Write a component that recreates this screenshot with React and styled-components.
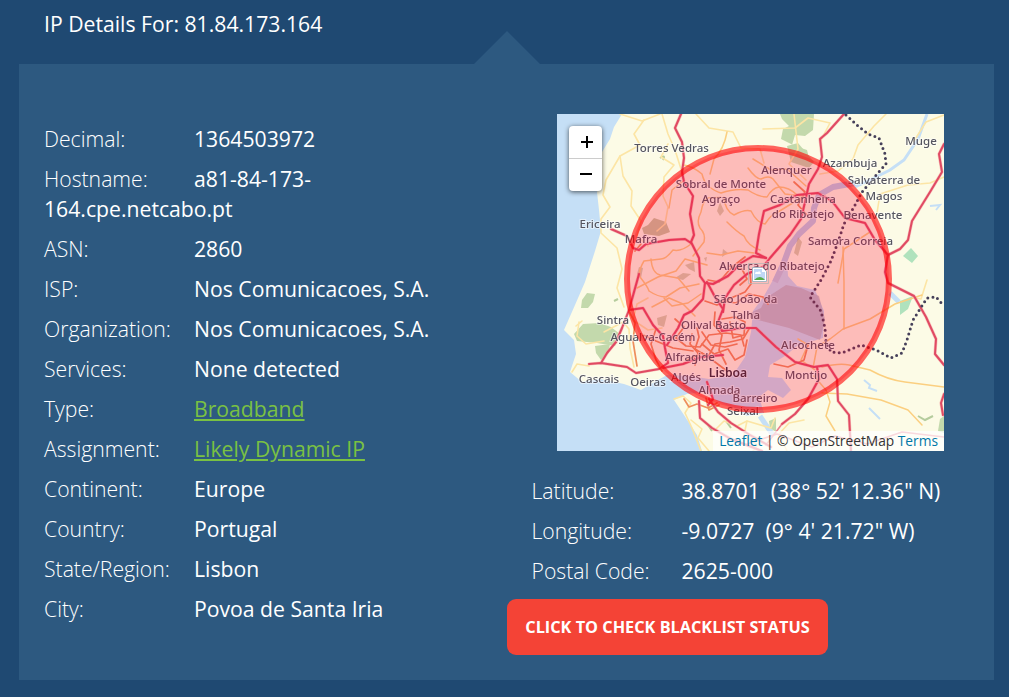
import React from "react";
import styled, { createGlobalStyle } from "styled-components";

const GlobalStyle = createGlobalStyle`
  * { box-sizing: border-box; }
  body {
    margin: 0;
    background: #1f4972;
    font-family: "Open Sans", sans-serif;
    color: #fff;
  }
`;

const Page = styled.main`
  height: 697px;
  overflow: hidden;
  background: #1f4972;
`;

const Heading = styled.h2`
  margin: 0;
  height: 64px;
  padding: 9px 44px 0;
  font-size: 21.2px;
  font-weight: 400;
  line-height: 30px;
`;

const Panel = styled.section`
  position: relative;
  display: flex;
  width: 975px;
  height: 616px;
  margin-left: 19px;
  background: #2d5980;
`;

const Pointer = styled.span`
  position: absolute;
  left: 455px;
  bottom: 100%;
  border: solid transparent;
  border-width: 0 33px 33px;
  border-bottom-color: #2d5980;
`;

const Details = styled.div`
  width: 488px;
  padding: 60px 25px 0;
`;

const Location = styled.div`
  padding-top: 50px;
`;

const Coordinates = styled.div`
  padding: 25px 0 3px 24.5px;
`;

const Row = styled.div`
  width: ${(p) => p.$width || "438px"};
  margin-bottom: 10px;
  font-size: 21.2px;
  line-height: 30px;
`;

const Label = styled.span`
  display: inline-block;
  width: 150px;
  font-weight: 300;
`;

const Value = styled.span`
  font-weight: 500;
  white-space: pre-wrap;
`;

const GreenLink = styled.a`
  color: #7ac143;
  font-weight: 400;
  text-decoration: underline;
`;

const BlacklistButton = styled.button`
  display: block;
  width: 321px;
  height: 56px;
  padding: 0;
  border: 0;
  border-radius: 9px;
  background: #f44336;
  color: #fff;
  font: 700 16.3px/56px "Open Sans", sans-serif;
`;

const MapFrame = styled.div`
  position: relative;
  width: 387px;
  height: 337px;
  margin-left: 50px;
  overflow: hidden;
  background: #fcfbe6;
`;

const MapDrawing = styled.svg`
  display: block;
`;

const Tiles = styled.g`
  filter: blur(0.45px);
`;

const ZoomControl = styled.div`
  position: absolute;
  left: 12px;
  top: 12px;
  width: 33px;
  border-radius: 4px;
  background: #fff;
  box-shadow: 0 1px 5px rgba(0, 0, 0, 0.65);
`;

const ZoomButton = styled.button`
  display: flex;
  align-items: center;
  justify-content: center;
  width: 33px;
  height: ${(p) => (p.$first ? "33px" : "32px")};
  padding: ${(p) => (p.$first ? "0 0 0 2px" : "0 0 2px 1px")};
  border: 0;
  border-bottom: ${(p) => (p.$first ? "1px solid #ccc" : "0")};
  background: transparent;
`;

const Attribution = styled.div`
  position: absolute;
  right: 0;
  bottom: 0;
  width: 231px;
  height: 20px;
  padding-right: 6px;
  background: rgba(255, 255, 255, 0.7);
  color: #333;
  font-size: 13.75px;
  line-height: 19px;
  text-align: right;
  white-space: nowrap;

  a { color: #0078a8; }
`;

const places = [
  ["Torres Vedras", 114.5, 37.5],
  ["Muge", 364, 31],
  ["Alenquer", 229.5, 59.5],
  ["Azambuja", 293, 53],
  ["Sobral de Monte", 164, 74],
  ["Agraço", 164, 89],
  ["Salvaterra de", 327, 70],
  ["Magos", 327, 85.5],
  ["Castanheira", 246, 88.5],
  ["do Ribatejo", 246, 104],
  ["Benavente", 316, 105],
  ["Ericeira", 43, 113.5],
  ["Mafra", 84, 129],
  ["Samora Correia", 293.5, 131],
  ["Alverca do Ribatejo", 215, 156],
  ["São João da", 188.5, 189],
  ["Talha", 188.5, 204.5],
  ["Sintra", 56, 210],
  ["Olival Basto", 156.5, 214.5],
  ["Agualva-Cacém", 96, 226.5],
  ["Alcochete", 251, 235],
  ["Alfragide", 133, 247],
  ["Lisboa", 171, 263, true],
  ["Montijo", 249, 265],
  ["Algés", 129, 267],
  ["Cascais", 42, 269],
  ["Oeiras", 91, 271.5],
  ["Almada", 162.5, 279.5],
  ["Barreiro", 198, 288],
  ["Seixal", 186, 301],
];

const motorways = [
  "M124 0 L118 14 L125 28 L127 44 L125 58 L127 68 L136 82 L133 100 L137 121 L134 128 L142 144 L143 162 L148 169 L156 170 L171 162 L184 149 L196 142 L209 144",
  "M287 0 L270 19 L263 25 L265 43 L261 55 L252 70 L248 88 L244 105 L233 121 L213 144 L206 153 L190 160 L177 171 L168 184 L166 198",
  "M54 115 L70 122 L76 134 L82 136 L89 130 L112 126 L128 125 L134 129",
  "M209 144 L199 139 L202 120 L207 97 L223 91 L240 81 L261 79 L275 87 L288 104 L308 109 L318 126 L331 141 L328 158 L331 169 L357 182 L369 203 L379 225 L378 240 L387 251",
  "M331 141 L343 135 L351 126 L355 107 L373 78 L385 58 L382 40 L387 30",
  "M72 196 L86 194 L96 211 L106 222 L108 234 L111 249 L102 255 L79 259 L70 253 L44 249 L32 250",
  "M44 249 L50 239 L59 228 L65 214 L72 196 L82 160",
  "M106 254 L126 250 L144 243 L166 241",
  "M148 169 L146 185 L135 197 L127 201 L121 214 L110 231",
  "M150 168 L158 183 L166 195 L161 208 L165 217 L184 214 L199 214 L219 233 L238 248 L257 253 L271 251 L280 265 L281 287 L292 301 L294 337",
  "M260 253 L262 265 L251 285 L238 300 L225 310",
  "M152 285 L161 298 L174 309 L193 321 L214 333",
  "M142 287 L143 304 L155 314 L174 325 L205 337",
  "M387 280 L384 289 L386 301",
  "M150 268 L156 285 L151 291",
];

const lightMotorways = [
  "M190 330 L220 320 L255 333 L278 322 L310 330 L345 318 L387 323",
  "M225 310 L209 331",
];

const urbanRoads = [
  "M148 187 L160 191 L174 184 L188 178 L194 170 L193 159",
  "M166 187 L179 189 L192 180 L206 183 L211 190",
  "M140 214 L142 223 L138 235 L151 243 L158 230 L173 228 L186 225 L192 215",
  "M118 205 L127 213 L119 224 L129 232 L143 233 L152 221 L169 219 L184 221 L187 232",
  "M145 230 L157 240 L171 235 L178 246 L187 241 L190 226",
  "M145 218 L154 231 L168 233 L180 230",
  "M130 246 L145 239 L158 248 L170 257",
  "M158 198 L157 211 L165 221 L162 236 L169 250",
  "M72 197 L78 209 L76 227 L80 252",
  "M99 215 L94 230 L99 246 L105 257",
  "M84 220 L99 227 L116 234 L136 237",
  "M135 220 L133 230 L141 239 L138 251",
  "M127 285 L132 293 L140 290 L151 294 L160 289",
  "M149 284 L152 296 L162 291",
  "M188 143 L175 153 L162 168 L151 166",
  "M237 68 L248 78 L241 91 L250 101",
  "M172 152 L185 155 L190 165 L183 171",
  "M165 205 L178 203 L188 208 L187 221 L176 224 L173 208",
  "M217 250 L231 253 L247 246 L251 231",
  "M78 137 L84 130",
];

const minorRoads = [
  "M63 0 L85 7 L103 0 M105 0 L111 20 L118 36 L124 55",
  "M87 6 L77 20 L83 31 L63 42 L66 62 L75 77 L74 92 L84 107 L80 122 L91 132",
  "M63 42 L49 66 L46 81 L53 93 L44 105 L44 119 L60 134 L65 155 L60 174 L67 193",
  "M111 30 L104 43 L117 51 L107 63 L106 82 L111 93 L108 110 L100 117",
  "M139 0 L152 14 L176 18 L184 34 L203 35 L207 49",
  "M206 15 L238 14 L251 4 L273 9 L264 26",
  "M237 0 L241 35 L232 50 L249 66",
  "M47 218 L66 208 L72 215 L73 234 L77 253",
  "M15 258 L20 250 L32 252 M19 212 L25 207",
  "M22 208 L20 222 L29 230 L47 227",
  "M91 184 L80 190 L76 206 L91 216 L105 214",
  "M117 285 L126 282 L134 289 L128 299 L135 314 L144 337",
  "M134 306 L145 315 L141 324 L152 337",
  "M157 317 L167 307 L180 312 L190 307 L214 314 L218 304",
  "M190 307 L187 321 L201 331 L196 337",
  "M230 337 L222 320 L232 309 L247 306",
  "M370 166 L364 185 L359 184",
  "M320 99 L323 80 L351 71 L373 69 L387 63",
  "M329 0 L317 12 L301 31 L296 45 L281 57 L263 60",
  "M357 27 L369 8 L387 1",
];

const amberRoads = [
  "M127 51 Q137 53 145 60 Q147 68 151 72 Q159 78 164 79 Q178 74 191 76 Q201 83 210 83 Q215 74 222 73 Q232 73 240 81",
  "M126 67 L115 76 L112 94",
  "M144 98 Q146 86 151 84 L164 83 M144 98 Q139 108 143 114 Q149 120 147 128 L136 142",
  "M134 130 Q124 138 116 136 Q109 145 104 145 L87 147 Q81 157 83 163 Q91 173 92 177 Q101 183 109 183 L123 174 L142 170",
  "M150 139 L164 141 L181 137 L197 139",
  "M167 83 Q168 97 177 101 Q188 95 194 97 Q200 109 208 110 Q216 98 221 98 L247 82",
  "M191 54 Q199 65 204 65 Q212 61 216 65 L228 80 L245 82",
  "M196 45 L214 56 L230 55 L249 72",
  "M281 169 L287 135 L313 118",
  "M286 133 L287 168 L287 215",
  "M365 181 L338 190 L313 205 L286 215 L273 225 L260 233 L256 254",
  "M241 225 L251 231 L244 246 L258 256",
  "M265 253 Q282 249 292 251 L313 256 Q331 266 348 268 L387 273",
  "M265 279 L290 280 L324 286 L351 296 L365 311",
  "M257 262 L269 276 L273 288 L269 302 L278 317",
  "M94 145 Q95 159 103 161 L121 164 L132 177",
  "M107 184 L115 192 L131 189 L144 180",
  "M80 174 L101 163 L119 157 L128 145 L150 151",
  "M95 193 L112 184 L126 190 L138 202",
  "M170 108 Q180 118 187 122 Q191 132 203 136",
  "M170 18 Q167 35 157 45 L153 60",
];

const woods = [
  "M223 0 L257 0 L256 16 L248 22 L238 21 L235 31 L250 36 L252 44 L242 42 L236 31 L224 25 L226 15 L232 12 L225 5 Z",
  "M230 32 L241 29 L257 48 L252 54 L234 48 Z",
  "M17 220 L26 210 L42 209 L54 213 L63 220 L58 232 L40 229 L20 227 Z",
  "M38 232 L53 230 L51 240 L44 246 L39 239 Z",
  "M25 186 L30 179 L38 180 L36 188 L31 194 L24 194 Z",
  "M383 305 L387 302 L387 319 L381 317 Z",
  "M212 307 L219 304 L219 318 L213 314 Z",
];

const Roads = ({ paths, color, width, ...rest }) => (
  <g fill="none" stroke={color} strokeWidth={width} strokeLinejoin="round" strokeLinecap="round" {...rest}>
    {paths.map((d) => <path key={d} d={d} />)}
  </g>
);

function PlaceLabel({ name, x, y, city }) {
  return (
    <text
      x={x}
      y={y}
      textAnchor="middle"
      fontFamily="Noto Sans, sans-serif"
      fontSize={city ? 12.2 : 11.5}
      fontWeight={city ? 600 : 500}
      fill={city ? "#2d2d38" : "#555560"}
      stroke="#ffffff"
      strokeOpacity="0.5"
      strokeWidth="2"
      paintOrder="stroke"
    >
      {name}
    </text>
  );
}

function LisbonMap() {
  return (
    <MapDrawing width="387" height="337" viewBox="0 0 387 337">
      <Tiles>
        <path
          fill="#c5dff6"
          d="M0 0 H65 L57 13 L53 25 L45 38 L44 68 L40 78 L42 96 L44 117 L38 137 L28 168 L18 191 L7 216 L17 226 L19 240 L13 258 L25 268 L43 265 L67 270 L84 276 L94 270 L110 261 L133 262 L152 265 L176 261 L188 243 L194 218 L196 197 L207 182 L217 164 L224 148 L230 146 L231 162 L240 172 L258 176 L267 197 L266 224 L240 232 L228 242 L213 251 L211 263 L225 264 L234 276 L226 284 L211 276 L202 283 L207 299 L190 302 L179 295 L160 287 L148 278 L130 280 L117 286 L127 301 L140 321 L145 337 H0 Z"
        />
        <path fill="#afabb8" d="M193 199 L204 194 L209 184 L229 171 L244 174 L262 182 L268 205 L263 226 L232 214 L193 204 Z" opacity=".6" />
        <path fill="none" stroke="#c5dff6" strokeWidth="3" d="M370 0 L361 25 L347 46 L333 56 L315 65 L298 73" />
        <path fill="none" stroke="#bccbe6" strokeWidth="6" strokeLinejoin="round" d="M298 69 L276 73 L262 81 L257 94 L256 107 L242 120 L233 132 L226 151 L218 168" />
        <g fill="none" stroke="#c5dff6">
          <path strokeWidth="2" d="M307 266 L313 271 L312 274 L320 277 M312 294 L323 305 M373 92 L383 91 L379 96" />
          <path strokeWidth="5" d="M203 302 L211 314 L216 321 M333 179 L342 188" />
        </g>
        <g fill="#c3d9ac">
          {woods.map((d) => <path key={d} d={d} />)}
        </g>
        <path fill="#b0e2bd" d="M346 142 L354 134 L361 142 L355 149 Z M343 187 L356 182 L351 195 L343 201 Z" />
        <g fill="#b1b07c" opacity=".7">
          <path d="M87 120 L85 114 L91 111 L97 104 L109 108 L113 118 L102 122 Z" />
          <path d="M118 164 L126 159 L134 160 L126 166 Z M128 151 L137 148 L138 158 L132 155 Z M160 97 L163 88 L167 97 L163 102 Z M166 135 L171 139 L165 143 Z M147 144 L150 143 L149 148 Z M82 153 L86 154 L84 164 L80 160 Z M100 204 L110 201 L107 213 L101 211 Z M241 123 L245 128 L241 142 L237 139 Z" opacity=".75" />
        </g>
        <g fill="none" stroke="#b5cc9d" strokeWidth="2">
          <path d="M103 44 Q109 40 106 46 M57 187 L61 185 M151 311 L155 317 M169 307 L174 314 M361 302 L368 306 L376 302" />
        </g>
        <Roads paths={minorRoads} color="#fce5a5" width="1.6" />
        <Roads paths={amberRoads} color="#fbcf80" width="1.5" />
        <Roads paths={urbanRoads} color="#ee8e5c" width="1.7" />
        <Roads paths={lightMotorways} color="#eb7d8c" width="1.6" />
        <Roads paths={motorways} color="#f5a0a1" width="3.2" opacity="0.6" />
        <Roads paths={motorways} color="#e04a63" width="2" />
        <path
          fill="none"
          stroke="#46405a"
          strokeWidth="3"
          strokeDasharray="0 5.2"
          strokeLinecap="round"
          d="M289 1 L301 12 L311 20 L322 24 L328 40 L329 50 L320 60 L305 78 L297 93 L287 110 L281 128 L274 147 L264 166 L253 183 L264 197 L268 214 L269 228 L274 238 L285 239 L304 231 L319 236 L334 244 L345 239 L350 226 L356 206 L370 184 L379 183 L387 192"
        />
        {places.map(([name, x, y, city]) => (
          <PlaceLabel key={name} name={name} x={x} y={y} city={city} />
        ))}
      </Tiles>
      <circle cx="201" cy="165" r="131" fill="#ff0033" fillOpacity="0.25" stroke="#ff0000" strokeOpacity="0.6" strokeWidth="6" />
      <g transform="translate(191 149)">
        <path fill="none" stroke="#b4b4b4" strokeOpacity=".75" d="M.5 .5 H20.5 V20.5 H.5 Z" />
        <path fill="#fff" stroke="#a7b5c2" d="M4.5 4.5 H14.5 L18.5 8.5 V18.5 H4.5 Z" />
        <path fill="#bfd8f5" d="M6 6 H14 V9 H17 V17 H6 Z" />
        <path fill="#fff" d="M7 11 Q7 8 10 9 Q12 7 13 11 Z M14 5 V9 H18 Z" />
        <path fill="#55ad49" d="M6 17 Q12 11 17 17 Z" />
      </g>
    </MapDrawing>
  );
}

const details = [
  ["Decimal:", "1364503972"],
  ["Hostname:", "a81-84-173-164.cpe.netcabo.pt"],
  ["ASN:", "2860"],
  ["ISP:", "Nos Comunicacoes, S.A."],
  ["Organization:", "Nos Comunicacoes, S.A."],
  ["Services:", "None detected"],
  ["Type:", "Broadband", true],
  ["Assignment:", "Likely Dynamic IP", true],
  ["Continent:", "Europe"],
  ["Country:", "Portugal"],
  ["State/Region:", "Lisbon"],
  ["City:", "Povoa de Santa Iria"],
];

const coordinates = [
  ["Latitude:", "38.8701  (38° 52' 12.36\" N)"],
  ["Longitude:", "-9.0727  (9° 4' 21.72\" W)"],
  ["Postal Code:", "2625-000"],
];

export default function App() {
  return (
    <Page>
      <GlobalStyle />
      <Heading>IP Details For: 81.84.173.164</Heading>
      <Panel>
        <Pointer />
        <Details>
          {details.map(([label, value, link]) => (
            <Row key={label} $width={label === "Hostname:" ? "390px" : undefined}>
              <Label>{label}</Label>
              {link ? <GreenLink>{value}</GreenLink> : <Value>{value}</Value>}
            </Row>
          ))}
        </Details>
        <Location>
          <MapFrame>
            <LisbonMap />
            <ZoomControl>
              <ZoomButton $first aria-label="Zoom in">
                <svg width="12" height="12" stroke="#000" strokeWidth="2"><path d="M0 6 H12 M6 0 V12" /></svg>
              </ZoomButton>
              <ZoomButton aria-label="Zoom out">
                <svg width="12" height="2"><path fill="#000" d="M0 0 H12 V2 H0 Z" /></svg>
              </ZoomButton>
            </ZoomControl>
            <Attribution><a>Leaflet</a> | © OpenStreetMap <a>Terms</a></Attribution>
          </MapFrame>
          <Coordinates>
            {coordinates.map(([label, value]) => (
              <Row key={label}><Label>{label}</Label><Value>{value}</Value></Row>
            ))}
          </Coordinates>
          <BlacklistButton>CLICK TO CHECK BLACKLIST STATUS</BlacklistButton>
        </Location>
      </Panel>
    </Page>
  );
}
